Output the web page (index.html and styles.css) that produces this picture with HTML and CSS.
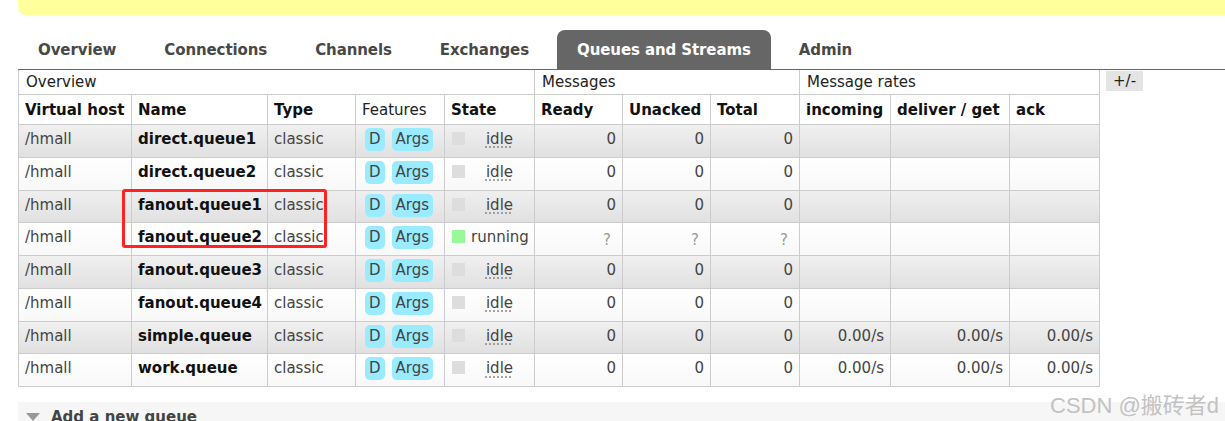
FILE: index.html
```
<!DOCTYPE html>
<html lang="en">
<head>
    <meta charset="UTF-8">
    <title>Queues and Streams</title>
    <link rel="stylesheet" href="styles.css">
</head>
<body>
    <div class="banner"></div>

    <div class="page">
        <ul class="tabs">
            <li>Overview</li>
            <li>Connections</li>
            <li>Channels</li>
            <li>Exchanges</li>
            <li class="active">Queues and Streams</li>
            <li>Admin</li>
        </ul>

        <div class="queues">
            <table class="list">
                <colgroup>
                    <col style="width:113px"><col style="width:136px"><col style="width:88px">
                    <col style="width:89px"><col style="width:90px"><col style="width:88px">
                    <col style="width:88px"><col style="width:89px"><col style="width:91px">
                    <col style="width:119px"><col style="width:90px">
                </colgroup>
                <thead>
                    <tr class="group">
                        <th colspan="5">Overview</th>
                        <th colspan="3">Messages</th>
                        <th colspan="3">Message rates</th>
                    </tr>
                    <tr class="cols">
                        <th>Virtual host</th>
                        <th>Name</th>
                        <th>Type</th>
                        <th class="plain">Features</th>
                        <th>State</th>
                        <th>Ready</th>
                        <th>Unacked</th>
                        <th>Total</th>
                        <th>incoming</th>
                        <th>deliver / get</th>
                        <th>ack</th>
                    </tr>
                </thead>
                <tbody>
                    <tr class="alt1">
                        <td>/hmall</td><td class="name">direct.queue1</td><td>classic</td>
                        <td><div class="features"><span class="tag">D</span><span class="tag">Args</span></div></td>
                        <td><div class="state"><span class="dot grey"></span><span class="status idle">idle</span></div></td>
                        <td class="num">0</td><td class="num">0</td><td class="num">0</td>
                        <td></td><td></td><td></td>
                    </tr>
                    <tr class="alt2">
                        <td>/hmall</td><td class="name">direct.queue2</td><td>classic</td>
                        <td><div class="features"><span class="tag">D</span><span class="tag">Args</span></div></td>
                        <td><div class="state"><span class="dot grey"></span><span class="status idle">idle</span></div></td>
                        <td class="num">0</td><td class="num">0</td><td class="num">0</td>
                        <td></td><td></td><td></td>
                    </tr>
                    <tr class="alt1">
                        <td>/hmall</td><td class="name">fanout.queue1</td><td>classic</td>
                        <td><div class="features"><span class="tag">D</span><span class="tag">Args</span></div></td>
                        <td><div class="state"><span class="dot grey"></span><span class="status idle">idle</span></div></td>
                        <td class="num">0</td><td class="num">0</td><td class="num">0</td>
                        <td></td><td></td><td></td>
                    </tr>
                    <tr class="alt2">
                        <td>/hmall</td><td class="name">fanout.queue2</td><td>classic</td>
                        <td><div class="features"><span class="tag">D</span><span class="tag">Args</span></div></td>
                        <td><div class="state"><span class="dot green"></span><span class="status">running</span></div></td>
                        <td class="num"><span class="unknown">?</span></td>
                        <td class="num"><span class="unknown">?</span></td>
                        <td class="num"><span class="unknown">?</span></td>
                        <td></td><td></td><td></td>
                    </tr>
                    <tr class="alt1">
                        <td>/hmall</td><td class="name">fanout.queue3</td><td>classic</td>
                        <td><div class="features"><span class="tag">D</span><span class="tag">Args</span></div></td>
                        <td><div class="state"><span class="dot grey"></span><span class="status idle">idle</span></div></td>
                        <td class="num">0</td><td class="num">0</td><td class="num">0</td>
                        <td></td><td></td><td></td>
                    </tr>
                    <tr class="alt2">
                        <td>/hmall</td><td class="name">fanout.queue4</td><td>classic</td>
                        <td><div class="features"><span class="tag">D</span><span class="tag">Args</span></div></td>
                        <td><div class="state"><span class="dot grey"></span><span class="status idle">idle</span></div></td>
                        <td class="num">0</td><td class="num">0</td><td class="num">0</td>
                        <td></td><td></td><td></td>
                    </tr>
                    <tr class="alt1">
                        <td>/hmall</td><td class="name">simple.queue</td><td>classic</td>
                        <td><div class="features"><span class="tag">D</span><span class="tag">Args</span></div></td>
                        <td><div class="state"><span class="dot grey"></span><span class="status idle">idle</span></div></td>
                        <td class="num">0</td><td class="num">0</td><td class="num">0</td>
                        <td class="num">0.00/s</td><td class="num">0.00/s</td><td class="num">0.00/s</td>
                    </tr>
                    <tr class="alt2">
                        <td>/hmall</td><td class="name">work.queue</td><td>classic</td>
                        <td><div class="features"><span class="tag">D</span><span class="tag">Args</span></div></td>
                        <td><div class="state"><span class="dot grey"></span><span class="status idle">idle</span></div></td>
                        <td class="num">0</td><td class="num">0</td><td class="num">0</td>
                        <td class="num">0.00/s</td><td class="num">0.00/s</td><td class="num">0.00/s</td>
                    </tr>
                </tbody>
            </table>
            <span class="toggle">+/-</span>
            <div class="highlight"></div>
        </div>

        <div class="section">
            <span class="arrow"></span>
            <span class="section-title">Add a new queue</span>
        </div>
    </div>

    <div class="watermark">CSDN @搬砖者d</div>
</body>
</html>
```

FILE: styles.css
```
body {
    margin: 0;
    font-family: "DejaVu Sans", Verdana, sans-serif;
    font-size: 15px;
    color: #444;
    background-color: #fff;
    overflow: hidden;
}
.banner {
    margin-left: 18px;
    height: 15px;
    background-color: #ffff9c;
    border-bottom-left-radius: 8px;
}
.page {
    padding-left: 18px;
}
.tabs {
    display: flex;
    list-style: none;
    margin: 15px 0 0 0;
    padding: 0;
    border-bottom: 1px solid #666;
}
.tabs li {
    padding: 2px 20px 0;
    margin-right: 8px;
    line-height: 37px;
    font-weight: bold;
    letter-spacing: -0.1px;
    color: #484848;
}
.tabs li.active {
    background-color: #666;
    color: #fff;
    border-radius: 8px 8px 0 0;
}
.queues {
    position: relative;
    display: flex;
    align-items: flex-start;
    gap: 6px;
}
.list {
    width: 1081px;
    table-layout: fixed;
    border-collapse: collapse;
}
.list th,
.list td {
    border: 1px solid #ccc;
    padding: 5px 6px 4px;
    line-height: 18px;
    text-align: left;
    vertical-align: top;
    white-space: nowrap;
}
.list tr.group th {
    border-top: none;
    font-weight: normal;
    color: #222;
    padding: 3px 7px 3px;
}
.list tr.cols th {
    color: #111;
    padding: 6px 6px 5px;
}
.list tr.cols th.plain {
    font-weight: normal;
    color: #222;
}
.list tbody tr {
    height: 32.75px;
}
.alt1 {
    background: linear-gradient(#f0f0f0, #e0e0e0);
}
.alt2 {
    background: linear-gradient(#fff, #f8f8f8);
}
.list td.name {
    font-weight: bold;
    color: #111;
}
.list td.num {
    text-align: right;
}
.unknown {
    display: inline-block;
    color: #999;
    margin-right: 5px;
    vertical-align: -3px;
}
.features {
    display: flex;
    gap: 7px;
    margin: -2px 0 0 3px;
}
.tag {
    background-color: #99ebff;
    border-radius: 5px;
    padding: 2px 4px 3px;
    line-height: 18px;
}
.state {
    display: flex;
    align-items: flex-start;
}
.dot {
    width: 13px;
    height: 13px;
    margin: 2px 6px 0 1px;
    flex: none;
}
.dot.grey {
    background-color: #ddd;
}
.dot.green {
    background-color: #99f899;
}
.status.idle {
    flex: 1;
    text-align: center;
    text-decoration: underline dotted #888;
    text-underline-offset: 3px;
}
.toggle {
    margin-top: 1px;
    padding: 0 7px;
    line-height: 20px;
    background-color: #e4e4e4;
    color: #222;
}
.highlight {
    position: absolute;
    left: 104px;
    top: 119px;
    width: 205px;
    height: 59px;
    box-sizing: border-box;
    border: 3px solid #f22;
    border-radius: 3px;
}
.section {
    margin-top: 15px;
    background-color: #f6f6f6;
    padding: 6px 8px;
    display: flex;
    align-items: center;
}
.arrow {
    width: 0;
    height: 0;
    border-left: 7px solid transparent;
    border-right: 7px solid transparent;
    border-top: 8px solid #999;
    margin-right: 11px;
}
.section-title {
    font-weight: bold;
    color: #444;
}
.watermark {
    position: absolute;
    left: 1050px;
    top: 387px;
    font-family: "Liberation Sans", "Noto Sans CJK SC", sans-serif;
    font-size: 22px;
    color: #c2c2c2;
}
```
